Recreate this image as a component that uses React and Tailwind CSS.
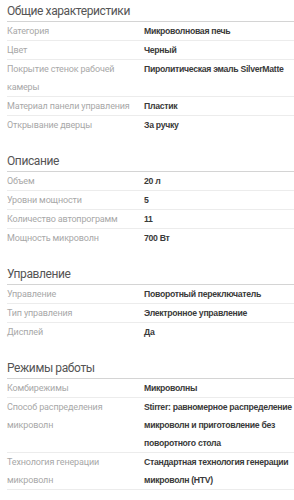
import React from "react";

const sections = [
    {
        title: "Общие характеристики",
        rows: [
            ["Категория", "Микроволновая печь"],
            ["Цвет", "Черный"],
            ["Покрытие стенок рабочей камеры", "Пиролитическая эмаль SilverMatte"],
            ["Материал панели управления", "Пластик"],
            ["Открывание дверцы", "За ручку"],
        ],
    },
    {
        title: "Описание",
        rows: [
            ["Объем", "20 л"],
            ["Уровни мощности", "5"],
            ["Количество автопрограмм", "11"],
            ["Мощность микроволн", "700 Вт"],
        ],
    },
    {
        title: "Управление",
        rows: [
            ["Управление", "Поворотный переключатель"],
            ["Тип управления", "Электронное управление"],
            ["Дисплей", "Да"],
        ],
    },
    {
        title: "Режимы работы",
        more: true,
        rows: [
            ["Комбирежимы", "Микроволны"],
            ["Способ распределения микроволн", "Stirrer: равномерное распределение микроволн и приготовление без поворотного стола"],
            ["Технология генерации микроволн", "Стандартная технология генерации микроволн (HTV)"],
        ],
    },
];

const SpecSection = ({ section }) => {
    return (
        <div className="mb-4">
            <h2 className="h-[22px] text-[12px] leading-[20px] tracking-[-0.4px] text-[#555] font-normal border-b border-[#d4d4d4] pt-[1px] font-['Roboto',Arial,sans-serif]">
                {section.title}
            </h2>
            {section.rows.map(([key, value], i) => {
                const last = i === section.rows.length - 1 && !section.more;
                return (
                    <div
                        key={key}
                        className={`flex text-[9px] leading-[18px] ${last ? "" : "border-b border-[#ececec]"}`}
                    >
                        <div className="w-[137px] shrink-0 pr-2 text-[#a8a8a8] tracking-[-0.15px] font-['Roboto',Arial,sans-serif]">{key}</div>
                        <div className="w-[150px] shrink-0 text-[8.7px] font-bold text-[#3a3a3a] tracking-[-0.3px]">{value}</div>
                    </div>
                );
            })}
        </div>
    );
};

export default function App() {
    return (
        <div className="bg-white min-h-[500px] pl-[7px] overflow-hidden font-['Liberation_Sans',Arial,sans-serif]">
            {sections.map((s) => (
                <SpecSection key={s.title} section={s} />
            ))}
        </div>
    );
}
